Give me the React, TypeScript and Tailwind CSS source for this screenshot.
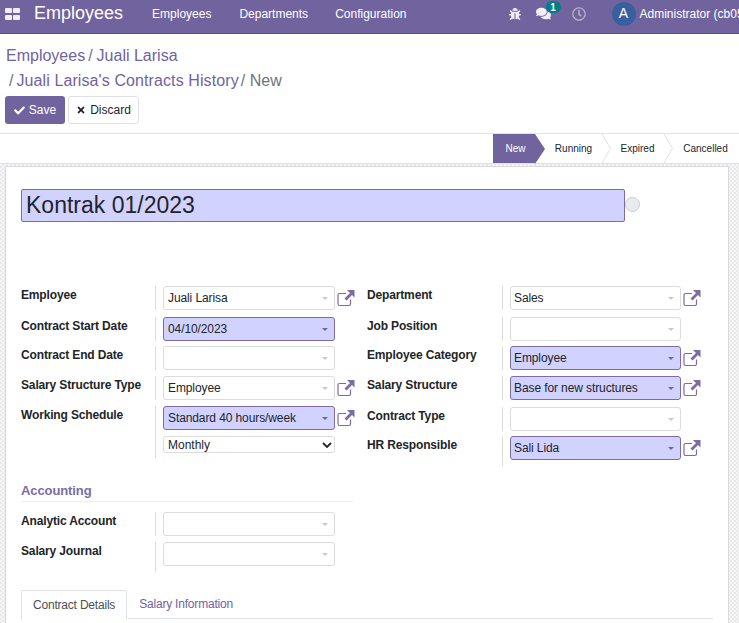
import { FaBug, FaCheck, FaComments, FaRegClock, FaTimes } from 'react-icons/fa';

const ExternalLink = () => (
  <svg viewBox="0 0 18 18" className="w-[18px] h-[18px] shrink-0 text-[#7c6ba6]" fill="none">
    <path d="M9 4.500H2.500a1.500 1.500 0 0 0-1.500 1.500v9a1.500 1.500 0 0 0 1.500 1.500h9.500a1.500 1.500 0 0 0 1.500-1.500V10.500" stroke="currentColor" strokeWidth="1.200" />
    <path d="M10 1h7.500v7.500l-2.500-2.500-5.500 5.500-2-2 5.500-5.500z" fill="currentColor" />
  </svg>
);

type RowData = { label: string; value?: string; required?: boolean; link?: boolean; mt: string };

const Field = ({ row, right }: { row: RowData; right?: boolean }) => (
  <div className="flex items-center h-6 w-[191px] gap-[2px]">
    <div
      className={
        'relative h-6 shrink-0 rounded-[3px] border text-[12px] leading-[22px] tracking-[-0.1px] text-[#212529] ' +
        (right ? 'w-[171px] pl-[3px] ' : 'w-[172px] pl-[4px] ') +
        (row.required ? 'bg-[#d2d2ff] border-[#7c6ba6]' : 'bg-white border-[#dcdcdc]')
      }
    >
      {row.value}
      <span
        className={
          'absolute right-[6px] top-[10px] w-0 h-0 border-x-[3px] border-x-transparent border-t-[3px] ' +
          (row.required ? 'border-t-[#6c6c8a]' : 'border-t-[#c8c8c8]')
        }
      />
    </div>
    {row.link && <ExternalLink />}
  </div>
);

const rowsLeft: RowData[] = [
  { label: 'Employee', value: 'Juali Larisa', link: true, mt: 'mt-0' },
  { label: 'Contract Start Date', value: '04/10/2023', required: true, mt: 'mt-[7px]' },
  { label: 'Contract End Date', mt: 'mt-[5px]' },
  { label: 'Salary Structure Type', value: 'Employee', link: true, mt: 'mt-[6px]' },
  { label: 'Working Schedule', value: 'Standard 40 hours/week', required: true, link: true, mt: 'mt-[6px]' },
];

const rowsRight: RowData[] = [
  { label: 'Department', value: 'Sales', link: true, mt: 'mt-0' },
  { label: 'Job Position', mt: 'mt-[7px]' },
  { label: 'Employee Category', value: 'Employee', required: true, link: true, mt: 'mt-[5px]' },
  { label: 'Salary Structure', value: 'Base for new structures', required: true, link: true, mt: 'mt-[6px]' },
  { label: 'Contract Type', mt: 'mt-[7px]' },
  { label: 'HR Responsible', value: 'Sali Lida', required: true, link: true, mt: 'mt-[5px]' },
];

const Row = ({ row, right }: { row: RowData; right?: boolean }) => (
  <div className={'flex ' + row.mt}>
    <div className={'shrink-0 pr-1 text-[12px] font-bold leading-[18px] tracking-[-0.15px] text-[#212529] ' + (right ? 'w-[135px]' : 'w-[134px]')}>
      {row.label}
    </div>
    <div className="border-l border-[#dcdcdc] pl-[7px]">
      <Field row={row} right={right} />
    </div>
  </div>
);

// rows share one divider, the gaps between them stay ruled
const Spacer = ({ right }: { right?: boolean }) => (
  <div className="flex">
    <div className={right ? 'w-[135px] shrink-0' : 'w-[134px] shrink-0'} />
    <div className="h-[6px] border-l border-[#dcdcdc]" />
  </div>
);

export default function App() {
  return (
    <div className="h-[623px] w-[739px] overflow-hidden bg-white font-['Liberation_Sans',Arial,sans-serif] text-[12px] text-[#212529]">
      {/* Navbar */}
      <div className="flex h-[34px] items-center border-b border-[#5f4e86] bg-[#71639e] pb-[6px] text-white">
        <div className="ml-[5px] grid shrink-0 grid-cols-2 gap-x-[1px] gap-y-[2px]">
          <span className="h-[5px] w-[7px] rounded-[1px] bg-white/90" />
          <span className="h-[5px] w-[7px] rounded-[1px] bg-white/90" />
          <span className="h-[5px] w-[7px] rounded-[1px] bg-white/90" />
          <span className="h-[5px] w-[7px] rounded-[1px] bg-white/90" />
        </div>
        <div className="ml-[14px] text-[18px]">Employees</div>
        <div className="ml-[29px]">Employees</div>
        <div className="ml-[28px]">Departments</div>
        <div className="ml-[27px]">Configuration</div>
        <FaBug className="ml-[102px] h-[12px] w-[12px] shrink-0 text-white/90" />
        <div className="relative ml-[15px]">
          <FaComments className="h-[15px] w-[15px] text-white/90" />
          <span className="absolute -right-[10px] -top-[5px] flex h-[12px] w-[15px] items-center justify-center rounded-full bg-[#017e84] text-[10px] font-bold">1</span>
        </div>
        <FaRegClock className="ml-[21px] h-[14px] w-[14px] shrink-0 text-white/50" />
        <div className="ml-[26px] flex h-6 w-6 shrink-0 items-center justify-center rounded-full bg-[#3a5fa0] text-[14px]">A</div>
        <div className="ml-[4px] whitespace-nowrap">Administrator (cb05)</div>
      </div>

      {/* Breadcrumb */}
      <div className="px-[6px] pt-[9px] text-[16px] leading-[25px] text-[#71639e]">
        <div>Employees<span className="ml-[3px] mr-[4px] text-[#6c757d]">/</span>Juali Larisa</div>
        <div className="pl-[3px]">
          <span className="mr-[3px] text-[#6c757d]">/</span>
          <span className="tracking-[0.1px]">Juali Larisa's Contracts History</span>
          <span className="ml-[2px] text-[#6c757d]">/ New</span>
        </div>
      </div>

      {/* Buttons */}
      <div className="flex gap-[3px] px-[5px] pt-[3px]">
        <button className="flex h-7 w-[60px] items-center justify-center gap-[4px] rounded-[3px] bg-[#71639e] text-white">
          <FaCheck className="h-[11px] w-[11px]" />
          Save
        </button>
        <button className="flex h-7 w-[71px] items-center justify-center gap-[4px] rounded-[3px] border border-[#dee2e6] bg-white text-[#212529]">
          <FaTimes className="h-[10px] w-[10px]" />
          Discard
        </button>
      </div>

      {/* Status bar */}
      <div className="mt-[9px] flex h-[31px] justify-end border-y border-[#dee2e6] text-[10px]">
        <div className="relative flex w-[42px] items-center justify-center bg-[#71639e] pl-[3px] text-white">
          New
          <span className="absolute -right-[10px] top-0 h-0 w-0 border-y-[15px] border-l-[10px] border-y-transparent border-l-[#71639e]" />
        </div>
        <div className="relative flex w-[67px] items-center justify-center pl-[10px]">
          Running
          <svg viewBox="0 0 9 29" className="absolute -right-[9px] top-0 h-[29px] w-[9px]" fill="none"><path d="M0 0l8.500 14.500L0 29" stroke="#dee2e6" /></svg>
        </div>
        <div className="relative flex w-[62px] items-center justify-center pl-[9px]">
          Expired
          <svg viewBox="0 0 9 29" className="absolute -right-[9px] top-0 h-[29px] w-[9px]" fill="none"><path d="M0 0l8.500 14.500L0 29" stroke="#dee2e6" /></svg>
        </div>
        <div className="flex w-[75px] items-center justify-center pl-[8px]">Cancelled</div>
      </div>

      {/* Sheet area */}
      <div className="h-[460px] bg-[repeating-conic-gradient(#e8e8e8_0%_25%,#f7f7f7_0%_50%)] bg-[length:4px_4px] pl-[5px] pr-[10px] pt-[2px]">
        <div className="h-full border border-[#d8d8e0] bg-white px-[15px] pt-[22px]">
          <div className="flex items-center">
            <div className="h-[33px] w-[604px] rounded-[2px] border border-[#7c6ba6] bg-[#d2d2ff] pl-1 text-[23px] leading-[31px] text-[#212529]">Kontrak 01/2023</div>
            <span className="mt-[-2px] h-[15px] w-[15px] rounded-full border border-[#c8ccd0] bg-[#e9ecef]" />
          </div>

          <div className="mt-[64px] flex">
            <div className="w-[346px] shrink-0">
              {rowsLeft.map(r => <Row key={r.label} row={r} />)}
              <div className="flex">
                <div className="w-[134px] shrink-0" />
                <div className="border-l border-[#dcdcdc] pb-[5px] pl-[7px] pt-[6px]">
                  <div className="flex h-[17px] w-[172px] items-center justify-between rounded-[3px] border border-[#dcdcdc] pl-[4px] pr-[2px] text-[12px]">
                    Monthly
                    <svg viewBox="0 0 10 6" className="h-[6px] w-[10px]" fill="none"><path d="M1 1l4 4 4-4" stroke="#212529" strokeWidth="1.800" /></svg>
                  </div>
                </div>
              </div>
            </div>
            <div>
              {rowsRight.map(r => <Row key={r.label} row={r} right />)}
              <Spacer right />
            </div>
          </div>

          <div className="mt-[16px] w-[332px] border-b border-[#eeeeee] pb-[1px] text-[13px] font-bold leading-[18px] tracking-[-0.1px] text-[#7c6ba6]">Accounting</div>
          <div className="mt-[10px]">
            <Row row={{ label: 'Analytic Account', mt: 'mt-0' }} />
            <Row row={{ label: 'Salary Journal', mt: 'mt-[6px]' }} />
            <Spacer />
          </div>

          <div className="mt-[18px] flex h-[29px] w-[692px] border-b border-[#dee2e6] tracking-[-0.2px]">
            <div className="h-[29px] rounded-t-[2px] border border-[#dee2e6] border-b-white bg-white px-[11px] leading-[28px] text-[#495057]">Contract Details</div>
            <div className="px-[12px] leading-[28px] text-[#71639e]">Salary Information</div>
          </div>
        </div>
      </div>
    </div>
  );
}
